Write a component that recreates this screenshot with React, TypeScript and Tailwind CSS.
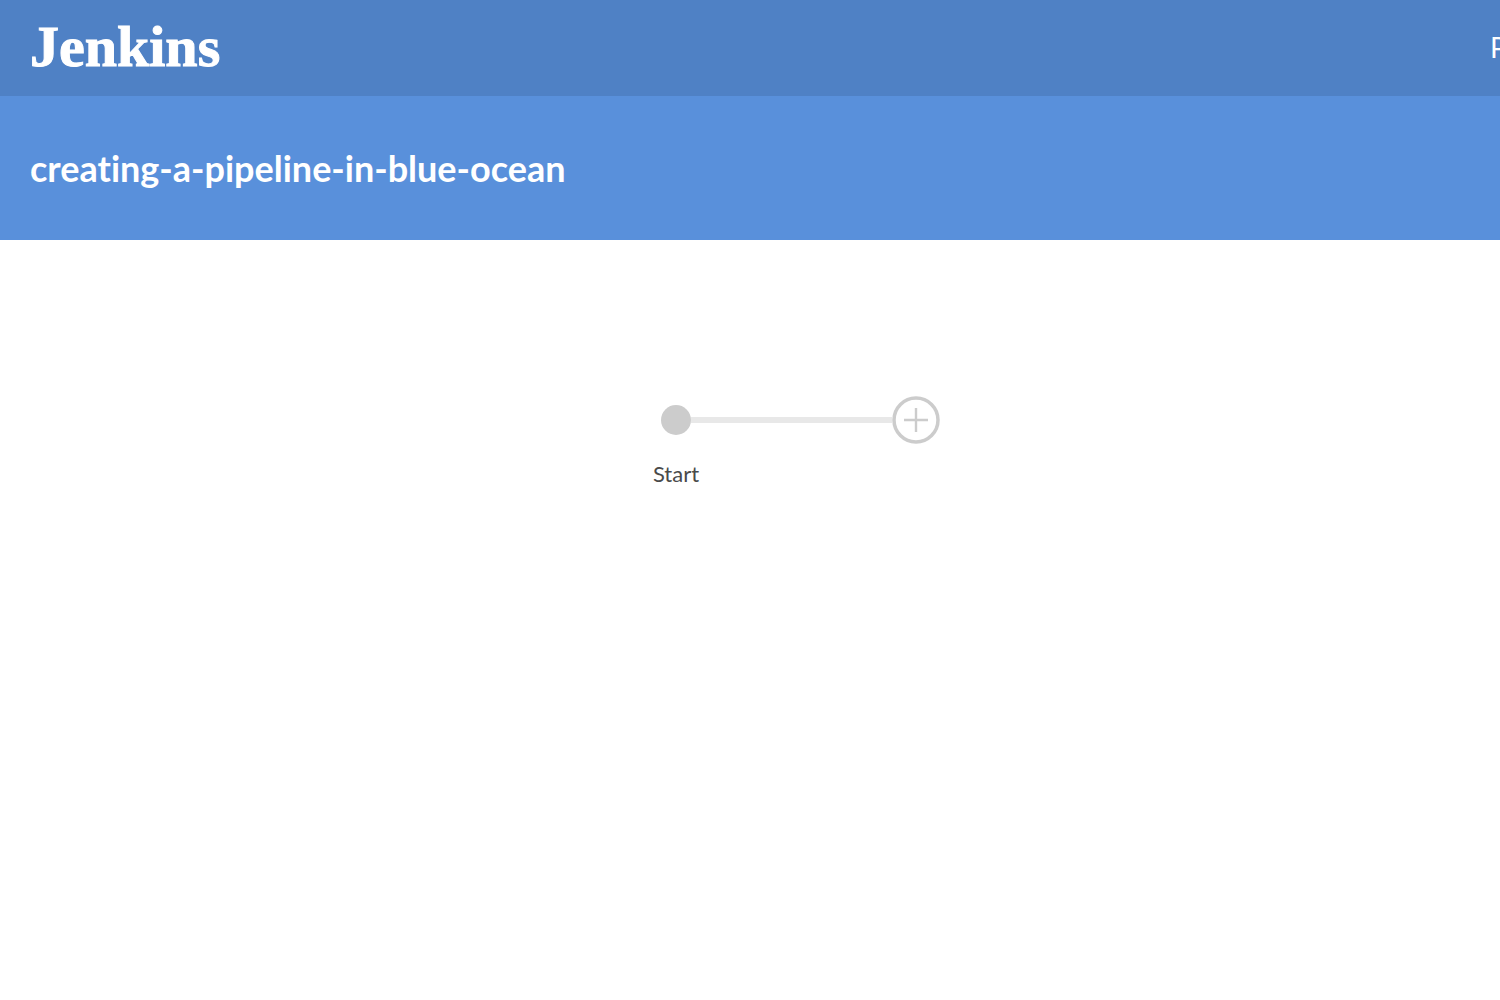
const navLinks = ["Pipelines"];

const App = () => {
  return (
    <div className="min-h-screen overflow-x-hidden bg-white font-['Lato',sans-serif] [font-variant-ligatures:none]">
      {/* Top bar */}
      <header className="flex h-24 items-center justify-between bg-[#4f81c5] pb-0.5 pl-[30px] text-white">
        <a
          href="#"
          className="font-['Liberation_Serif',serif] text-[58px] leading-none font-bold [-webkit-text-stroke:1px_white]"
        >
          Jenkins
        </a>
        <nav className="w-[10px] overflow-hidden">
          {navLinks.map((link) => (
            <a key={link} href="#" className="text-[28px] leading-9">
              {link}
            </a>
          ))}
        </nav>
      </header>

      {/* Pipeline title */}
      <div className="flex h-36 items-center bg-[#5990db] px-[30px] text-white">
        <h1 className="text-4xl font-bold">creating-a-pipeline-in-blue-ocean</h1>
      </div>

      {/* Stage graph */}
      <main className="flex justify-center pt-[156px] pl-[92px]">
        <div className="flex flex-col">
          <div className="flex items-center pl-[9px]">
            <div className="size-[30px] rounded-full bg-[#cccccc]"></div>
            <div className="h-[6px] w-[201px] bg-[#e8e8e8]"></div>
            <button type="button" aria-label="Add stage">
              <svg className="size-12" viewBox="0 0 48 48" fill="none">
                <circle cx="24" cy="24" r="22" stroke="#cccccc" strokeWidth="3.5" />
                <path d="M24 12v24M12 24h24" stroke="#cccccc" strokeWidth="2.4" />
              </svg>
            </button>
          </div>
          <span className="mt-3 w-12 text-center text-[22px] leading-9 text-[#4a4a4a]">
            Start
          </span>
        </div>
      </main>
    </div>
  );
};
export default App;
